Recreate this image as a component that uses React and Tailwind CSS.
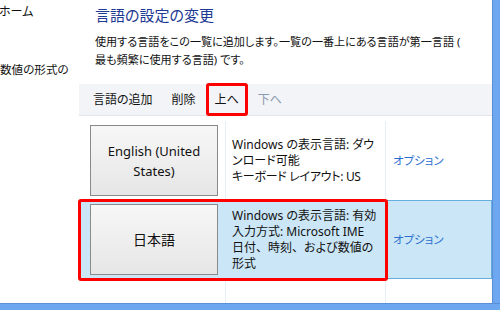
import React from "react";

const jp = "font-['Noto_Sans','Noto_Sans_CJK_JP',sans-serif] [font-feature-settings:'palt']";

function LangButton({ children }) {
  return (
    <div className="h-[71px] w-[128px] border border-[#8a8a8a] bg-gradient-to-b from-[#f7f7f7] to-[#e6e6e6] flex items-center justify-center text-center text-[13px] leading-[20px] text-[#111]">
      {children}
    </div>
  );
}

const Comma = () => <span className="[font-feature-settings:normal]">、</span>;

export default function App() {
  return (
    <div className={`w-[500px] h-[310px] flex flex-col bg-white overflow-hidden ${jp}`}>
      <div className="flex flex-1 min-h-0">
        {/* left nav */}
        <div className="w-[79px] shrink-0 overflow-hidden text-[12px] text-[#111]">
          <div className="ml-[-1px] mt-[3px] leading-[18px]">ホーム</div>
          <div className="mt-[40px] text-[11.6px] leading-[18px] whitespace-nowrap">数値の形式の</div>
        </div>

        {/* main */}
        <div className="flex-1 flex flex-col min-w-0">
          <div className="pl-[16px] pt-[5px] text-[15px] leading-[20px] text-[#1e3a94]">言語の設定の変更</div>
          <div className="pl-[16px] mt-[8px] text-[11.1px] leading-[18px] text-[#111] whitespace-nowrap">
            使用する言語をこの一覧に追加します。一覧の一番上にある言語が第一言語 (<br />
            最も頻繁に使用する言語) です。
          </div>

          {/* toolbar */}
          <div className="mt-[15px] h-[32px] bg-[#f3f4f7] border-b border-[#e1e4e9] flex items-center pl-[6px] gap-[3px] text-[12px]">
            <div className="px-[8px] text-[#111]">言語の追加</div>
            <div className="px-[8px] text-[#111]">削除</div>
            <div className="relative px-[8px] h-full flex items-center text-[#111]">
              上へ
              <span className="absolute left-[-1px] right-[-1px] top-[-1px] bottom-[-1px] border-[3px] border-[#ff0000] rounded-[3px]" />
            </div>
            <div className="px-[8px] text-[#8b9bb0]">下へ</div>
          </div>

          {/* list */}
          <div className="flex-1 flex flex-col pt-[5px]">
            <div className="h-[79px] grid grid-cols-[147px_160px_1fr]">
              <div className="border-r border-[#e6eef7] pl-[11px] pt-[4px]">
                <LangButton>
                  English (United
                  <br />
                  States)
                </LangButton>
              </div>
              <div className="border-r border-[#e6eef7] pl-[6px] flex items-center text-[12px] leading-[16px] text-[#111]">
                <div>
                  Windows の表示言語: ダウ
                  <br />
                  ンロード可能
                  <br />
                  <span className="tracking-[-0.3px]">キーボード レイアウト: US</span>
                </div>
              </div>
              <div className="pl-[7px] flex items-center text-[11.5px] text-[#2a6fd0]">オプション</div>
            </div>

            <div className="relative h-[79px] grid grid-cols-[147px_160px_1fr] bg-[#cbe6f6] border border-[#66aee0]">
              <div className="pl-[10px] pt-[3px]">
                <LangButton>
                  <span className="text-[14px]">日本語</span>
                </LangButton>
              </div>
              <div className="pl-[5px] flex items-center text-[12px] leading-[16px] text-[#111]">
                <div>
                  Windows の表示言語: 有効
                  <br />
                  入力方式: Microsoft IME
                  <br />
                  日付<Comma />時刻<Comma />および数値の
                  <br />
                  形式
                </div>
              </div>
              <div className="pl-[6px] flex items-center text-[11.5px] text-[#2a6fd0]">オプション</div>
              <span className="absolute left-[-2px] top-[-2px] w-[310px] bottom-[-3px] border-[3px] border-[#ff0000] rounded-[3px]" />
            </div>

            <div className="flex-1 grid grid-cols-[147px_160px_1fr]">
              <div className="border-r border-[#e6eef7]" />
              <div className="border-r border-[#e6eef7]" />
              <div />
            </div>
          </div>
        </div>

        {/* right bar */}
        <div className="w-[8px] shrink-0 bg-[#6ca7f0] border-l border-[#5a8fd6]" />
      </div>
      <div className="h-[7px] shrink-0 bg-[#6ca7f0] border-t border-[#5a8fd6]" />
    </div>
  );
}
